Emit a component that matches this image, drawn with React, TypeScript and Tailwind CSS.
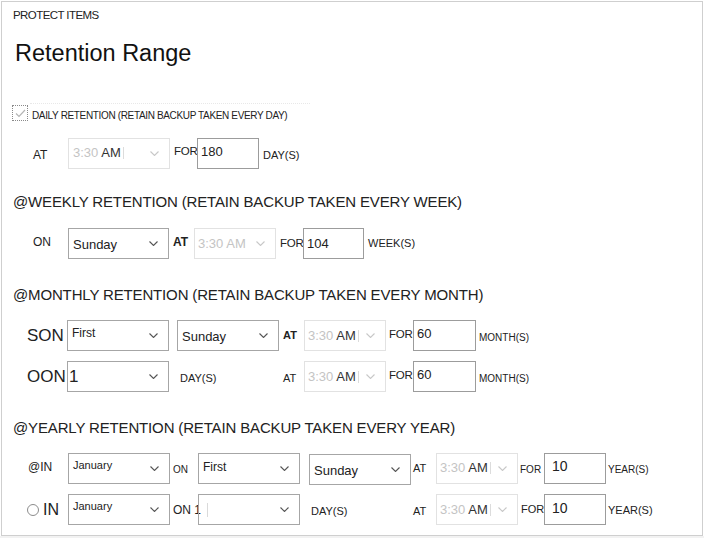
import React from 'react';

const FONT = "font-['Liberation_Sans',Arial,sans-serif]";

const Chevron = ({ light }: { light?: boolean }) => (
  <svg width="9" height="5" viewBox="0 0 9 5" className="shrink-0">
    <path d="M0.5 0.5 L4.5 4.5 L8.5 0.5" fill="none" stroke={light ? '#c8c8c8' : '#555'} strokeWidth="1.1" />
  </svg>
);

interface SelectProps {
  className: string;
  children?: React.ReactNode;
  top?: boolean;
  disabled?: boolean;
}

const Select: React.FC<SelectProps> = ({ className, children, top, disabled }) => (
  <div
    className={`relative flex shrink-0 justify-between pr-[10px] border ${
      disabled ? 'border-[#e2e2e2]' : 'border-[#a6a6a6]'
    } ${top ? 'items-start pt-[3px]' : 'items-center'} ${className}`}
  >
    <div className="flex items-center whitespace-nowrap">{children}</div>
    <div className={top ? 'mt-[9px]' : ''}>
      <Chevron light={disabled} />
    </div>
  </div>
);

const TimeSelect = ({ allLight }: { allLight?: boolean }) => (
  <Select disabled className="w-[82px] h-[31px] pl-[3px]">
    <span className="text-[13px] text-[#c4c4c4]">3:30</span>
    <span className={`text-[13px] ml-[3px] ${allLight ? 'text-[#c4c4c4]' : 'text-[#333]'}`}>AM</span>
    {!allLight && <span className="ml-[2px] w-px h-[12px] bg-[#dcdcdc]" />}
  </Select>
);

const NumInput = ({ value, className }: { value: string; className: string }) => (
  <div className={`flex items-center shrink-0 border border-[#9c9c9c] pl-[3px] text-[13px] text-[#222] ${className}`}>
    {value}
  </div>
);

const Label = ({ className, children }: { className: string; children: React.ReactNode }) => (
  <div className={`shrink-0 whitespace-nowrap text-[#222] ${className}`}>{children}</div>
);

export default function App() {
  return (
    <div className={`${FONT} w-[704px] h-[538px] bg-white flex flex-col`}>
      <div className="ml-[1px] mt-[1px] w-[702px] h-[535px] border border-[#cfcfcf] bg-white flex flex-col shrink-0">
        {/* Header */}
        <div className="mt-[5px] ml-[11px] h-[16px] leading-[16px] text-[11.5px] tracking-[-0.05em] text-[#222]">
          PROTECT ITEMS
        </div>
        <div className="mt-[16px] ml-[13px] h-[28px] leading-[28px] text-[23.5px] text-[#111]">Retention Range</div>

        {/* Daily */}
        <div className="mt-[38px] h-[16px] flex items-center">
          <div className="ml-[10px] w-[16px] h-[16px] border border-dotted border-[#8a8a8a] flex items-center justify-center">
            <svg width="11" height="9" viewBox="0 0 11 9">
              <path d="M1 4.5 L4 7.5 L10 1" fill="none" stroke="#b5b5b5" strokeWidth="1.2" />
            </svg>
          </div>
          <div className="ml-[4px] mt-[4px] relative text-[10px] tracking-[-0.035em] text-[#222] whitespace-nowrap">
            <div className="absolute left-[-2px] top-[-5px] w-[280px] border-t border-dotted border-[#e8e8e8]" />
            DAILY RETENTION (RETAIN BACKUP TAKEN EVERY DAY)
          </div>
        </div>
        <div className="mt-[17px] h-[30px] flex items-center">
          <Label className="ml-[31px] w-[35px] text-[12px] mt-[4px]">AT</Label>
          <Select disabled className="w-[102px] h-[31px] pl-[4px]">
            <span className="text-[13px] text-[#c4c4c4]">3:30</span>
            <span className="text-[13px] ml-[3px] text-[#333]">AM</span>
            <span className="ml-[2px] w-px h-[12px] bg-[#dcdcdc]" />
          </Select>
          <Label className="ml-[4px] w-[23px] text-[11.5px] tracking-[-0.02em] mb-[2px]">FOR</Label>
          <NumInput value="180" className="w-[62px] h-[31px] pb-[2px]" />
          <Label className="ml-[4px] text-[11px] mt-[4px]">DAY(S)</Label>
        </div>

        {/* Weekly */}
        <div className="mt-[24px] ml-[11px] h-[20px] leading-[20px] text-[15px] tracking-[-0.01em] text-[#222] whitespace-nowrap">
          @WEEKLY RETENTION (RETAIN BACKUP TAKEN EVERY WEEK)
        </div>
        <div className="mt-[16px] h-[31px] flex items-center">
          <Label className="ml-[31px] w-[35px] text-[12px] mb-[4px]">ON</Label>
          <Select className="w-[101px] h-[31px] pl-[4px]">
            <span className="text-[13px] text-[#222] mt-[3px]">Sunday</span>
          </Select>
          <Label className="ml-[4px] w-[21px] text-[12px] font-bold mb-[4px]">AT</Label>
          <TimeSelect allLight />
          <Label className="ml-[4px] w-[23px] text-[11.5px] tracking-[-0.02em]">FOR</Label>
          <NumInput value="104" className="w-[61px] h-[31px]" />
          <Label className="ml-[4px] text-[11px]">WEEK(S)</Label>
        </div>

        {/* Monthly */}
        <div className="mt-[26px] ml-[11px] h-[20px] leading-[20px] text-[15px] tracking-[-0.01em] text-[#222] whitespace-nowrap">
          @MONTHLY RETENTION (RETAIN BACKUP TAKEN EVERY MONTH)
        </div>
        <div className="mt-[15px] h-[31px] flex items-center">
          <Label className="ml-[25px] w-[40px] text-[17px]">SON</Label>
          <Select top className="w-[102px] h-[31px] pl-[4px]">
            <span className="text-[12px] text-[#222]">First</span>
          </Select>
          <Select className="ml-[8px] w-[102px] h-[31px] pl-[4px]">
            <span className="text-[13px] text-[#222] mt-[3px]">Sunday</span>
          </Select>
          <Label className="ml-[4px] w-[21px] text-[11px] font-bold">AT</Label>
          <TimeSelect />
          <Label className="ml-[3px] w-[24px] text-[11.5px] tracking-[-0.02em] mb-[2px]">FOR</Label>
          <NumInput value="60" className="w-[63px] h-[31px] pb-[3px]" />
          <Label className="ml-[3px] text-[10px] mt-[4px]">MONTH(S)</Label>
        </div>
        <div className="mt-[10px] h-[31px] flex items-center">
          <Label className="ml-[25px] w-[40px] text-[17px]">OON</Label>
          <Select className="w-[102px] h-[31px] pl-[1px]">
            <span className="text-[17px] text-[#222]">1</span>
          </Select>
          <Label className="ml-[11px] w-[103px] text-[11px] mt-[4px]">DAY(S)</Label>
          <Label className="w-[21px] text-[11px] mt-[4px]">AT</Label>
          <TimeSelect />
          <Label className="ml-[3px] w-[24px] text-[11.5px] tracking-[-0.02em] mb-[2px]">FOR</Label>
          <NumInput value="60" className="w-[63px] h-[31px] pb-[3px]" />
          <Label className="ml-[3px] text-[10px] mt-[4px]">MONTH(S)</Label>
        </div>

        {/* Yearly */}
        <div className="mt-[26px] ml-[11px] h-[20px] leading-[20px] text-[15px] tracking-[-0.01em] text-[#222] whitespace-nowrap">
          @YEARLY RETENTION (RETAIN BACKUP TAKEN EVERY YEAR)
        </div>
        <div className="mt-[14px] h-[32px] flex items-center">
          <Label className="ml-[26px] w-[40px] text-[12px] mb-[2px]">@IN</Label>
          <Select top className="w-[102px] h-[31px] pl-[4px]">
            <span className="text-[11px] text-[#222]">January</span>
          </Select>
          <Label className="ml-[3px] w-[25px] text-[10px] mt-[2px]">ON</Label>
          <Select className="w-[102px] h-[31px] pl-[4px]">
            <span className="text-[12px] text-[#222] mb-[3px]">First</span>
          </Select>
          <Select className="ml-[9px] w-[102px] h-[31px] pl-[4px] mt-[2px]">
            <span className="text-[13px] text-[#222] mt-[3px]">Sunday</span>
          </Select>
          <Label className="ml-[2px] w-[23px] text-[11px]">AT</Label>
          <TimeSelect />
          <Label className="ml-[2px] w-[24px] text-[10px] mt-[2px]">FOR</Label>
          <NumInput value="10" className="w-[62px] h-[31px] pl-[7px] text-[14px] pb-[3px]" />
          <Label className="ml-[2px] text-[10px] mt-[2px]">YEAR(S)</Label>
        </div>
        <div className="mt-[10px] h-[31px] flex items-center">
          <div className="ml-[25px] w-[12px] h-[12px] rounded-full border border-[#8c8c8c] shrink-0" />
          <Label className="ml-[4px] w-[25px] text-[16px]">IN</Label>
          <Select top className="w-[102px] h-[31px] pl-[4px]">
            <span className="text-[11px] text-[#222]">January</span>
          </Select>
          <Label className="ml-[3px] w-[25px] text-[12px]">ON 1</Label>
          <Select className="w-[102px] h-[31px] pl-[8px]">
            <span className="w-px h-[14px] bg-[#dadada]" />
          </Select>
          <Label className="ml-[11px] w-[102px] text-[11px] mt-[3px]">DAY(S)</Label>
          <Label className="w-[23px] text-[11px] mt-[3px]">AT</Label>
          <TimeSelect />
          <Label className="ml-[3px] w-[23px] text-[11px]">FOR</Label>
          <NumInput value="10" className="w-[62px] h-[31px] pl-[7px] text-[14px] pb-[3px]" />
          <Label className="ml-[2px] text-[11px] mt-[2px]">YEAR(S)</Label>
        </div>
      </div>
      <div className="flex-1 bg-[#f2f2f2]" />
    </div>
  );
}
